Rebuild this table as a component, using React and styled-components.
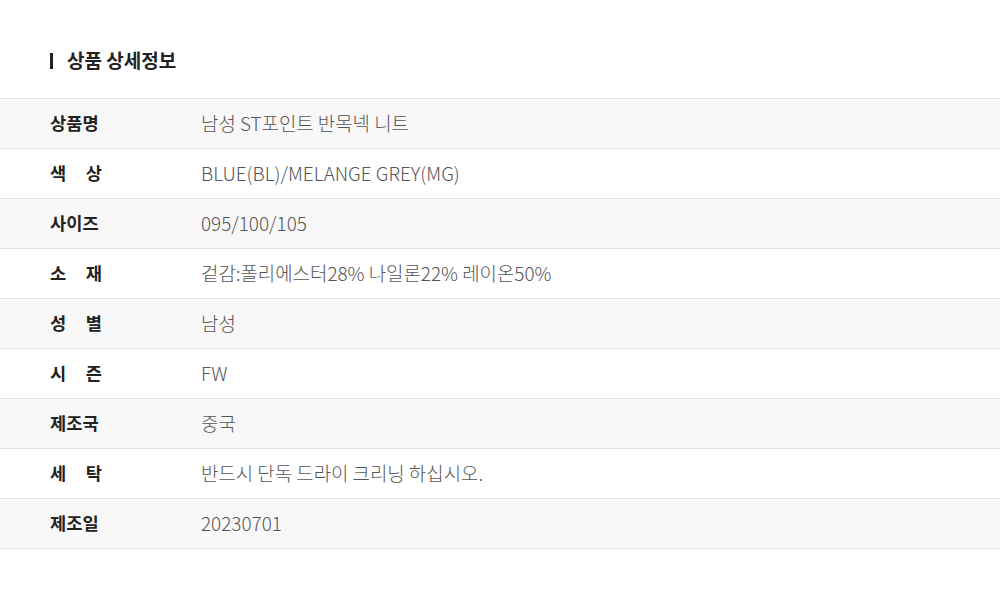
import React from 'react'
import styled, { createGlobalStyle } from "styled-components";

const rows = [
    ["상품명", "남성 ST포인트 반목넥 니트"],
    ["색상", "BLUE(BL)/MELANGE GREY(MG)"],
    ["사이즈", "095/100/105"],
    ["소재", "겉감:폴리에스터28% 나일론22% 레이온50%"],
    ["성별", "남성"],
    ["시즌", "FW"],
    ["제조국", "중국"],
    ["세탁", "반드시 단독 드라이 크리닝 하십시오."],
    ["제조일", "20230701"],
];

function App() {
    return (
        <>
            <GlobalStyle />
            <Wrapper>
                <Title>상품 상세정보</Title>
                <Table>
                    {rows.map(([label, value], i) => (
                        <Row key={label} $shaded={i % 2 === 0}>
                            <Label $spread={label.length === 2}>
                                {label.split("").map((ch, j) => <span key={j}>{ch}</span>)}
                            </Label>
                            <Value>{value}</Value>
                        </Row>
                    ))}
                </Table>
            </Wrapper>
        </>
    )
}

const GlobalStyle = createGlobalStyle`
body{
    margin:0;
    background:#fff;
    font-family:"Noto Sans CJK KR", "Noto Sans", sans-serif;
}
`

const Wrapper = styled.section`
    width:1000px;
    padding-top:48px;
`

const Title = styled.h2`
    margin:0 0 26px 50px;
    padding-left:17px;
    position:relative;
    font-size:19px;
    font-weight:700;
    color:#222;
    line-height:24px;
    height:24px;
    &::before{
        content:"";
        position:absolute;
        left:0;
        top:5px;
        width:3px;
        height:16px;
        background:#222;
    }
`

const Table = styled.div`
    border-top:1px solid #e0e0e0;
`

const Row = styled.div`
    display:flex;
    align-items:center;
    box-sizing:border-box;
    height:50px;
    padding-bottom:3px;
    border-bottom:1px solid #e0e0e0;
    background:${p => p.$shaded ? "#f8f8f8" : "#fff"};
`

const Label = styled.div`
    width:52px;
    margin-left:50px;
    margin-right:99px;
    display:flex;
    justify-content:${p => p.$spread ? "space-between" : "flex-start"};
    font-size:17.6px;
    font-weight:700;
    color:#222;
`

const Value = styled.div`
    font-size:18.9px;
    font-weight:300;
    color:#555;
`

export default App
